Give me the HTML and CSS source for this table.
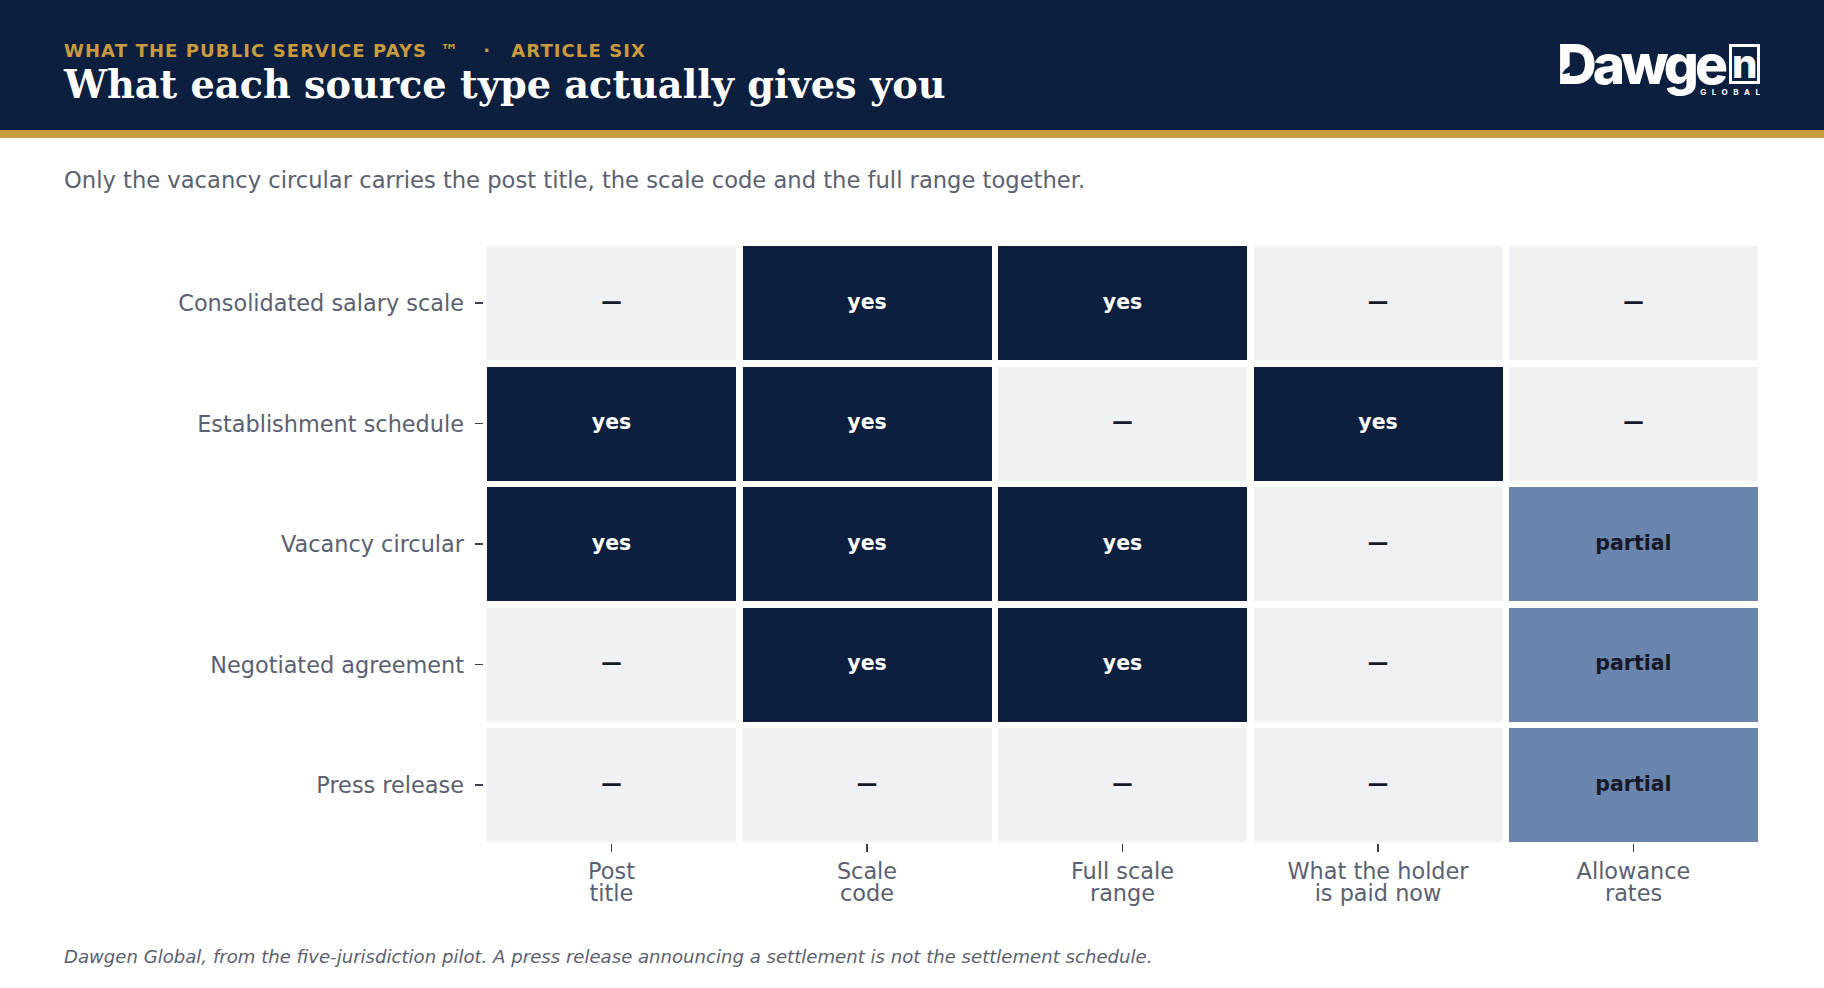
FILE: index.html
```html
<!DOCTYPE html>
<html lang="en">
<head>
<meta charset="utf-8">
<title>What each source type actually gives you</title>
<link rel="stylesheet" href="styles.css">
</head>
<body>
<header class="masthead">
  <div class="titles">
    <div class="kicker">WHAT THE PUBLIC SERVICE PAYS<span class="tm">™</span><span class="sep">·</span>ARTICLE SIX</div>
    <h1 class="title">What each source type actually gives you</h1>
  </div>
  <div class="logo" aria-label="Dawgen Global">
    <div class="logo-word">Dawge<span class="logo-n">n</span><svg class="logo-leaf" width="18" height="12" viewBox="0 0 18 12"><path d="M0 11 Q5 1 17 1 Q11 11 0 11 Z"/></svg></div>
    <div class="logo-sub">GLOBAL</div>
  </div>
</header>

<p class="lede">Only the vacancy circular carries the post title, the scale code and the full range together.</p>

<section class="matrix">
  <div class="row-labels">
    <div class="row-label">Consolidated salary scale</div>
    <div class="row-label">Establishment schedule</div>
    <div class="row-label">Vacancy circular</div>
    <div class="row-label">Negotiated agreement</div>
    <div class="row-label">Press release</div>
  </div>
  <div class="cells">
    <div class="cell no">—</div>
    <div class="cell yes">yes</div>
    <div class="cell yes">yes</div>
    <div class="cell no">—</div>
    <div class="cell no">—</div>

    <div class="cell yes">yes</div>
    <div class="cell yes">yes</div>
    <div class="cell no">—</div>
    <div class="cell yes">yes</div>
    <div class="cell no">—</div>

    <div class="cell yes">yes</div>
    <div class="cell yes">yes</div>
    <div class="cell yes">yes</div>
    <div class="cell no">—</div>
    <div class="cell partial">partial</div>

    <div class="cell no">—</div>
    <div class="cell yes">yes</div>
    <div class="cell yes">yes</div>
    <div class="cell no">—</div>
    <div class="cell partial">partial</div>

    <div class="cell no">—</div>
    <div class="cell no">—</div>
    <div class="cell no">—</div>
    <div class="cell no">—</div>
    <div class="cell partial">partial</div>
  </div>
</section>

<div class="axis">
  <div class="axis-item"><div class="axis-label">Post<br>title</div></div>
  <div class="axis-item"><div class="axis-label">Scale<br>code</div></div>
  <div class="axis-item"><div class="axis-label">Full scale<br>range</div></div>
  <div class="axis-item"><div class="axis-label">What the holder<br>is paid now</div></div>
  <div class="axis-item"><div class="axis-label">Allowance<br>rates</div></div>
</div>

<p class="source">Dawgen Global, from the five-jurisdiction pilot. A press release announcing a settlement is not the settlement schedule.</p>
</body>
</html>
```

FILE: styles.css
```css
html, body {
  margin: 0;
  padding: 0;
  background: #ffffff;
}

body {
  width: 1824px;
  font-family: "DejaVu Sans", "Liberation Sans", sans-serif;
  color: #5b6170;
}

.masthead {
  height: 90px;
  padding: 40px 64px 0 64px;
  background: #0c1f3f;
  border-bottom: 8px solid #c99a3e;
  display: flex;
  justify-content: space-between;
  align-items: flex-start;
}

.kicker {
  font-family: "DejaVu Sans", sans-serif;
  font-weight: bold;
  font-size: 18px;
  line-height: 22px;
  letter-spacing: 1.1px;
  color: #c99a3e;
  white-space: nowrap;
}

.tm {
  margin-left: 13px;
}

.sep {
  display: inline-block;
  margin: 0 20px 0 24px;
}

.title {
  margin: 1px 0 0 0;
  font-family: "DejaVu Serif", "Liberation Serif", serif;
  font-weight: bold;
  font-size: 38.25px;
  line-height: 44px;
  color: #ffffff;
  white-space: nowrap;
}

.logo {
  margin-top: 4px;
  display: flex;
  flex-direction: column;
  align-items: flex-end;
  color: #ffffff;
}

.logo-word {
  position: relative;
  font-family: Inter, Lato, "DejaVu Sans", sans-serif;
  font-weight: 800;
  font-size: 55px;
  line-height: 40px;
  letter-spacing: -4px;
  white-space: nowrap;
}

.logo-n {
  display: inline-block;
  vertical-align: top;
  box-sizing: border-box;
  width: 31px;
  height: 40px;
  margin-left: 5px;
  border: 3px solid #ffffff;
  font-size: 40px;
  line-height: 34px;
  letter-spacing: 0;
  text-align: center;
}

.logo-leaf {
  position: absolute;
  left: 5px;
  top: 19px;
  fill: #0c1f3f;
}

.logo-sub {
  margin-top: 4px;
  margin-right: -5.5px;
  font-family: Inter, "DejaVu Sans", sans-serif;
  font-weight: 700;
  font-size: 8px;
  line-height: 8px;
  letter-spacing: 5.5px;
}

.lede {
  margin: 30px 0 0 64px;
  font-size: 22.63px;
  line-height: 24px;
  color: #5b6170;
}

.matrix {
  margin-top: 54px;
  padding-left: 64px;
  display: flex;
}

.row-labels {
  width: 423px;
  display: flex;
  flex-direction: column;
  gap: 6.5px;
}

.row-label {
  height: 114px;
  padding-right: 4px;
  display: flex;
  align-items: center;
  justify-content: flex-end;
  gap: 11px;
  font-size: 22.4px;
  color: #5b6170;
  white-space: nowrap;
}

.row-label::after {
  content: "";
  width: 8px;
  height: 1.5px;
  background: #3b404c;
}

.cells {
  display: grid;
  grid-template-columns: repeat(5, 249px);
  grid-template-rows: repeat(5, 114px);
  gap: 6.5px;
}

.cell {
  box-sizing: border-box;
  padding-bottom: 3px;
  display: flex;
  align-items: center;
  justify-content: center;
  font-weight: bold;
  font-size: 20.5px;
}

.cell.yes {
  background: #0c1f3f;
  color: #ffffff;
}

.cell.no {
  background: #eff1f5;
  color: #15192a;
}

.cell.partial {
  background: #6b86ae;
  color: #15192a;
}

.axis {
  margin-left: 487px;
  display: grid;
  grid-template-columns: repeat(5, 249px);
  column-gap: 6.5px;
}

.axis-item {
  display: flex;
  flex-direction: column;
  align-items: center;
}

.axis-item::before {
  content: "";
  width: 1.5px;
  height: 8px;
  margin-top: 2px;
  background: #3b404c;
}

.axis-label {
  margin-top: 8px;
  font-size: 22.4px;
  line-height: 22px;
  text-align: center;
  color: #5b6170;
}

.source {
  margin: 42px 0 0 64px;
  font-style: italic;
  font-size: 18.1px;
  line-height: 22px;
  color: #5b6170;
}
```
